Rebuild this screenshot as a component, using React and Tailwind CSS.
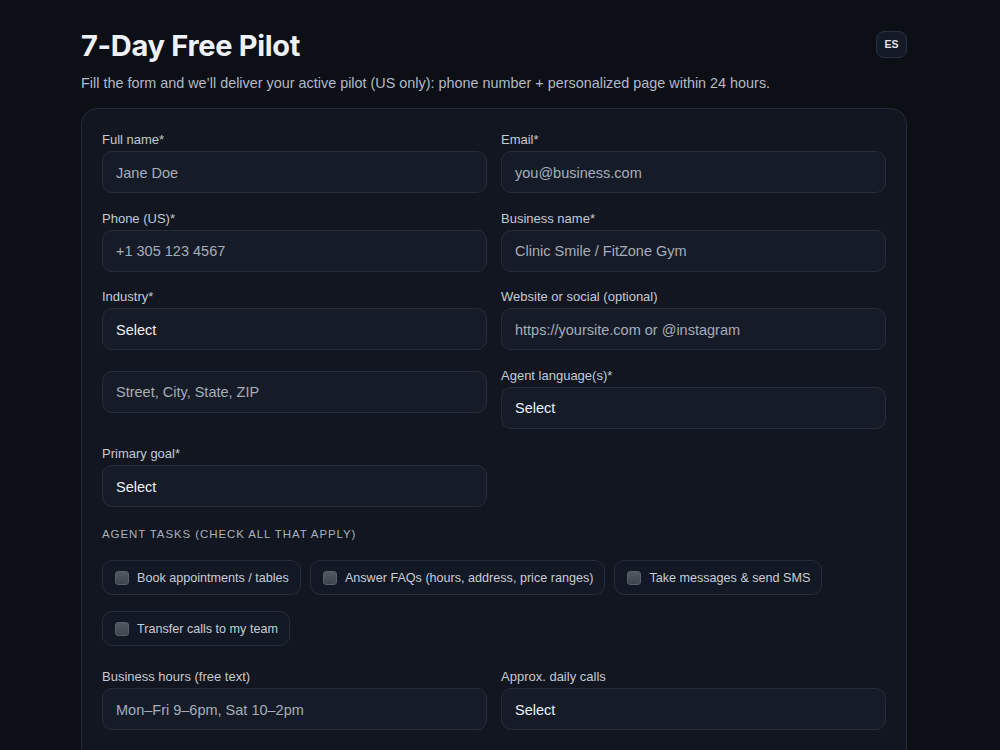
const font = { fontFamily: '"Liberation Sans", Arial, sans-serif' }
const titleFont = { fontFamily: 'Inter, "Noto Sans", sans-serif' }

function Label({ children }) {
  return <div className="h-[16px] mb-[5px] pt-[2px] text-[13px] leading-[16px] text-[#c3cad4]">{children}</div>
}

function Field({ label, placeholder, select, noLabel }) {
  return (
    <div>
      {noLabel ? <div className="mb-[5px]" /> : <Label>{label}</Label>}
      <div className="h-[42px] rounded-[10px] border border-[#262e3b] bg-[#161c27] px-[13px] pt-[3px] flex items-center text-[14.5px]">
        {select ? (
          <span className="text-[#eef1f6]">Select</span>
        ) : (
          <span className="text-[#a6adb8]">{placeholder}</span>
        )}
      </div>
    </div>
  )
}

function Task({ children }) {
  return (
    <div className="h-[35px] flex items-center gap-[8px] pl-[12px] pr-[11px] rounded-[10px] border border-[#262e3b] bg-[#121824]">
      <span className="w-[14px] h-[14px] rounded-[3px] bg-gradient-to-b from-[#525862] to-[#3f454f] border border-[#5a606a]" />
      <span className="pt-[1px] text-[12.6px] text-[#c7cdd6]">{children}</span>
    </div>
  )
}

export default function App() {
  return (
    <div className="bg-[#0c0f15] h-[750px] overflow-hidden" style={font}>
      <div className="ml-[81px] w-[826px] pt-[28px]">
        <div className="flex items-start justify-between">
          <h1 className="text-[29px] leading-[36px] font-bold text-[#eef2f8] tracking-[-0.3px]" style={titleFont}>
            7-Day Free Pilot
          </h1>
          <button className="mt-[3px] w-[31px] h-[27px] rounded-[8px] border border-[#283040] bg-[#151b26] text-[10.5px] font-semibold text-[#dfe4ec]">
            ES
          </button>
        </div>
        <p className="mt-[10px] text-[14.4px] leading-[18px] text-[#b3bac5]">
          Fill the form and we’ll deliver your active pilot (US only): phone number + personalized page within 24 hours.
        </p>

        <div className="mt-[16px] rounded-[16px] border border-[#232b38] bg-[#111620] px-[20px] pt-[21px] pb-[24px]">
          <div className="grid grid-cols-2 gap-x-[14px] gap-y-[15.6px]">
            <Field label="Full name*" placeholder="Jane Doe" />
            <Field label="Email*" placeholder="you@business.com" />
            <Field label="Phone (US)*" placeholder="+1 305 123 4567" />
            <Field label="Business name*" placeholder="Clinic Smile / FitZone Gym" />
            <Field label="Industry*" select />
            <Field label="Website or social (optional)" placeholder="https://yoursite.com or @instagram" />
            <Field noLabel placeholder="Street, City, State, ZIP" />
            <Field label="Agent language(s)*" select />
            <Field label="Primary goal*" select />
          </div>

          <div className="mt-[20px] text-[11.5px] leading-[14px] tracking-[0.9px] text-[#a9b0bb]">
            AGENT TASKS (CHECK ALL THAT APPLY)
          </div>
          <div className="mt-[19px] flex flex-wrap gap-x-[9px] gap-y-[16px]">
            <Task>Book appointments / tables</Task>
            <Task>Answer FAQs (hours, address, price ranges)</Task>
            <Task>Take messages &amp; send SMS</Task>
            <Task>Transfer calls to my team</Task>
          </div>

          <div className="mt-[21px] grid grid-cols-2 gap-x-[14px] gap-y-[15.6px]">
            <Field label="Business hours (free text)" placeholder="Mon–Fri 9–6pm, Sat 10–2pm" />
            <Field label="Approx. daily calls" select />
            <Field label="Agent name in the call" placeholder="Sofia" />
            <Field label="Transfer number (optional)" placeholder="+1 305 000 0000" />
          </div>
        </div>
      </div>
    </div>
  )
}
